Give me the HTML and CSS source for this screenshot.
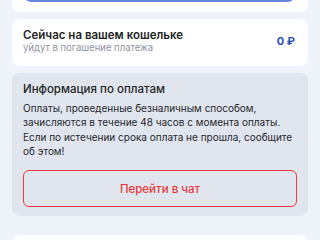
FILE: index.html
```html
<!DOCTYPE html>
<html lang="ru">
<head>
  <meta charset="UTF-8" />
  <meta name="viewport" content="width=device-width, initial-scale=1" />
  <title>Кошелек</title>
  <link rel="stylesheet" href="styles.css">
</head>
<body>
  <main class="page">
    <section class="card card-top">
      <button class="btn btn-primary" type="button">Оплатить</button>
    </section>

    <section class="card wallet">
      <div>
        <h2 class="wallet-title">Сейчас на вашем кошельке</h2>
        <p class="wallet-hint">уйдут в погашение платежа</p>
      </div>
      <span class="wallet-sum">0 ₽</span>
    </section>

    <section class="card info">
      <h2 class="info-title">Информация по оплатам</h2>
      <p class="info-text">Оплаты, проведенные безналичным способом, зачисляются в течение 48 часов с момента оплаты. Если по истечении срока оплата не прошла, сообщите об этом!</p>
      <button class="btn btn-outline" type="button">Перейти в чат</button>
    </section>

    <section class="card card-next"></section>
  </main>
</body>
</html>
```

FILE: styles.css
```css
:root{
  --bg:#eff3fa;
  --card:#ffffff;
  --card-muted:#e1e5ee;
  --text:#1d1f24;
  --muted:#8c93a3;
  --blue:#2b4fb4;
  --blue-light:#6a86d8;
  --red:#e5393b;
  --radius:8px;
}

* { box-sizing: border-box; }
body{
  margin:0;
  background:var(--bg);
  color:var(--text);
  font-family: Inter, "Noto Sans", "Liberation Sans", sans-serif;
}

.page{ display:flex; flex-direction:column; gap:7px; padding:0 12px; }

.card{ background:var(--card); border-radius:var(--radius); padding:12px 11px; }

/* scrolled past: only the lower edge is visible */
.card-top{ margin-top:-48px; padding:10px 14px 10px 13px; border-radius:0 0 var(--radius) var(--radius); }

.btn{
  appearance:none; display:block; width:100%; height:37px; border-radius:6px;
  font:inherit; font-size:11.5px; font-weight:500; cursor:pointer;
}
.btn-primary{ background:var(--blue-light); color:#fff; border:none; height:40px; }
.btn-outline{ background:transparent; color:var(--red); border:1px solid var(--red); }

.wallet{ display:flex; align-items:center; justify-content:space-between; padding:9px 13px 12px 11px; }
.wallet-title{ margin:0; font-size:11.5px; font-weight:600; line-height:14px; }
.wallet-hint{ margin:0; font-size:9.5px; line-height:12px; color:var(--muted); }
.wallet-sum{ color:var(--blue); font-size:11px; font-weight:700; }

.info{ background:var(--card-muted); padding:8.5px 11px 9px; margin-bottom:12px; }
.info-title{ margin:0 0 5px; font-size:11.5px; font-weight:500; line-height:14px; }
.info-text{ margin:0 0 11.5px; font-size:10px; line-height:14.5px; color:#25272d; }

.card-next{ height:40px; }
```
